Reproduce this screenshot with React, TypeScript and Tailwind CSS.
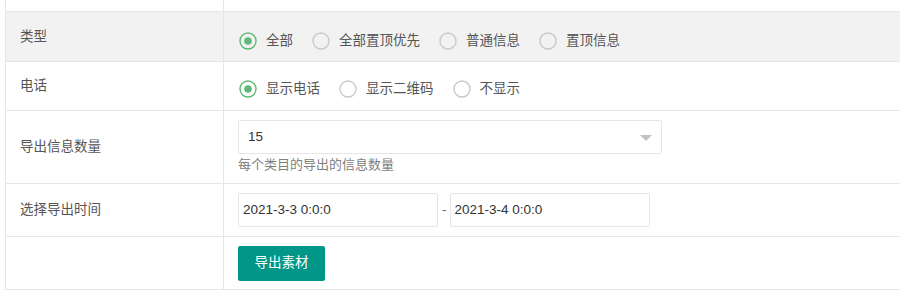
import React from "react";

const FONT = '"Liberation Sans", "Noto Sans CJK SC", sans-serif';

function Radio({ checked, label }: { checked?: boolean; label: string }) {
  return (
    <div className="flex items-center mr-[19px]">
      <svg width="18" height="18" viewBox="0 0 18 18" className="shrink-0">
        <circle
          cx="9"
          cy="9"
          r="8"
          fill="none"
          stroke={checked ? "#5FB878" : "#c9c9c9"}
          strokeWidth="1.4"
        />
        {checked && <circle cx="9" cy="9" r="3.8" fill="#5FB878" />}
      </svg>
      <span className="ml-[9px] text-[13.5px] leading-[20px] text-[#555] whitespace-nowrap">{label}</span>
    </div>
  );
}

function Row({
  label,
  h,
  bg,
  children,
}: {
  label?: string;
  h: string;
  bg?: string;
  children?: React.ReactNode;
}) {
  return (
    <div className={`flex border-b border-[#e6e6e6] ${h} ${bg ?? "bg-white"}`}>
      <div className="w-[218px] shrink-0 border-r border-[#e6e6e6] flex items-center pl-[14px] pt-[1px] text-[13.5px] text-[#555]">
        {label}
      </div>
      <div className="flex-1 pl-[14px] flex">{children}</div>
    </div>
  );
}

export default function App() {
  return (
    <div className="w-[900px] h-[299px] bg-white overflow-hidden" style={{ fontFamily: FONT }}>
      <div className="ml-[5px] border-l border-[#e6e6e6]">
        <Row h="h-[12px]" />
        <Row label="类型" h="h-[50px]" bg="bg-[#f2f2f2]">
          <div className="flex items-center pt-[8px] ml-[1px]">
            <Radio checked label="全部" />
            <Radio label="全部置顶优先" />
            <Radio label="普通信息" />
            <Radio label="置顶信息" />
          </div>
        </Row>
        <Row label="电话" h="h-[49px]">
          <div className="flex items-center pt-[5px] ml-[1px]">
            <Radio checked label="显示电话" />
            <Radio label="显示二维码" />
            <Radio label="不显示" />
          </div>
        </Row>
        <Row label="导出信息数量" h="h-[73px]">
          <div className="flex flex-col pt-[9px]">
            <div className="w-[424px] h-[34px] border border-[#e6e6e6] rounded-[2px] bg-white flex items-center justify-between pl-[9px] pr-[9px]">
              <span className="text-[13.5px] text-[#333]">15</span>
              <span className="w-0 h-0 border-l-[6px] border-r-[6px] border-t-[6px] border-l-transparent border-r-transparent border-t-[#c2c2c2] mt-[1px]" />
            </div>
            <div className="text-[13px] leading-[20px] text-[#808080] mt-[1px]">每个类目的导出的信息数量</div>
          </div>
        </Row>
        <Row label="选择导出时间" h="h-[53px]">
          <div className="flex items-center">
            <div className="w-[200px] h-[34px] border border-[#e6e6e6] rounded-[2px] flex items-center pl-[4px] text-[13.5px] text-[#333]">
              2021-3-3 0:0:0
            </div>
            <span className="ml-[4px] mr-[3px] text-[13.5px] text-[#666]">-</span>
            <div className="w-[200px] h-[34px] border border-[#e6e6e6] rounded-[2px] flex items-center pl-[4px] text-[13.5px] text-[#333]">
              2021-3-4 0:0:0
            </div>
          </div>
        </Row>
        <Row h="h-[53px]">
          <div className="flex items-center">
            <button className="w-[87px] h-[35px] bg-[#009688] rounded-[2px] text-white text-[13.5px] flex items-center justify-center">
              导出素材
            </button>
          </div>
        </Row>
      </div>
    </div>
  );
}
